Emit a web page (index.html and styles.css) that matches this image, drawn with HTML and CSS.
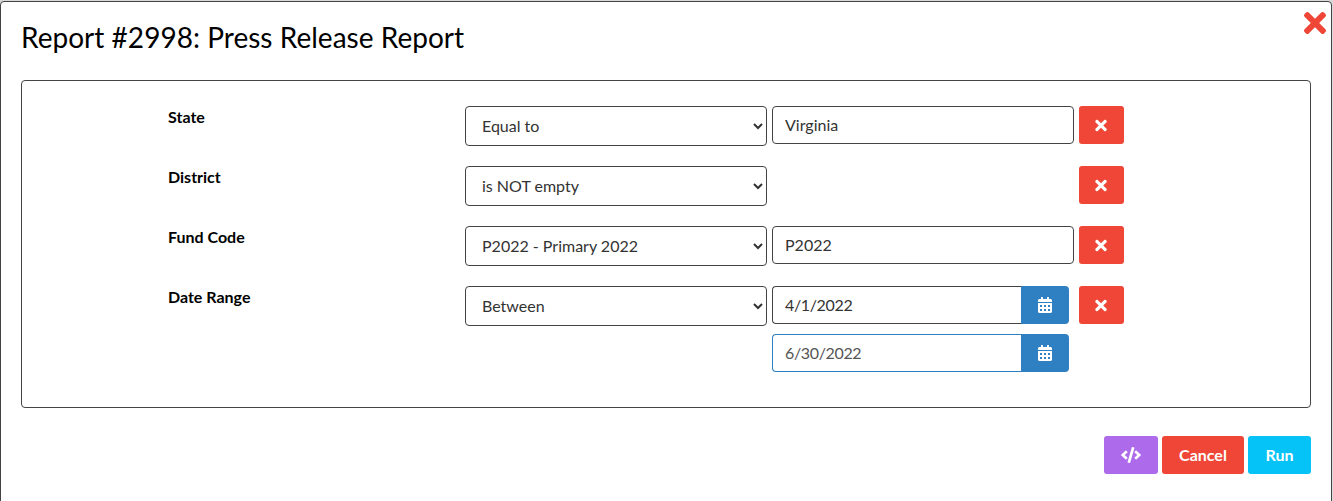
FILE: index.html
```html
<!DOCTYPE html>
<html lang="en">
<head>
    <meta charset="UTF-8">
    <meta name="viewport" content="width=device-width, initial-scale=1.0">
    <title>Press Release Report</title>
    <link rel="stylesheet" href="styles.css">
</head>
<body>
    <svg class="sprite">
        <symbol id="times" viewBox="0 0 352 512">
            <path d="M242.72 256l100.07-100.07c12.28-12.28 12.28-32.19 0-44.48l-22.24-22.24c-12.28-12.28-32.19-12.28-44.48 0L176 189.28 75.93 89.21c-12.28-12.28-32.19-12.28-44.48 0L9.21 111.45c-12.28 12.28-12.28 32.19 0 44.48L109.28 256 9.21 356.07c-12.28 12.28-12.28 32.19 0 44.48l22.24 22.24c12.28 12.28 32.2 12.28 44.48 0L176 322.72l100.07 100.07c12.28 12.28 32.2 12.28 44.48 0l22.24-22.24c12.28-12.28 12.28-32.19 0-44.48L242.72 256z"/>
        </symbol>
        <symbol id="calendar" viewBox="0 0 448 512">
            <path d="M0 464c0 26.5 21.5 48 48 48h352c26.5 0 48-21.5 48-48V192H0v272zm320-196c0-6.6 5.4-12 12-12h40c6.6 0 12 5.4 12 12v40c0 6.6-5.4 12-12 12h-40c-6.6 0-12-5.4-12-12v-40zm0 128c0-6.6 5.4-12 12-12h40c6.6 0 12 5.4 12 12v40c0 6.6-5.4 12-12 12h-40c-6.6 0-12-5.4-12-12v-40zM192 268c0-6.6 5.4-12 12-12h40c6.6 0 12 5.4 12 12v40c0 6.6-5.4 12-12 12h-40c-6.6 0-12-5.4-12-12v-40zm0 128c0-6.6 5.4-12 12-12h40c6.6 0 12 5.4 12 12v40c0 6.6-5.4 12-12 12h-40c-6.6 0-12-5.4-12-12v-40zM64 268c0-6.6 5.4-12 12-12h40c6.6 0 12 5.4 12 12v40c0 6.6-5.4 12-12 12H76c-6.6 0-12-5.4-12-12v-40zm0 128c0-6.6 5.4-12 12-12h40c6.6 0 12 5.4 12 12v40c0 6.6-5.4 12-12 12H76c-6.6 0-12-5.4-12-12v-40zM400 64h-48V16c0-8.8-7.2-16-16-16h-32c-8.8 0-16 7.2-16 16v48H160V16c0-8.8-7.2-16-16-16h-32c-8.8 0-16 7.2-16 16v48H48C21.5 64 0 85.5 0 112v48h448v-48c0-26.5-21.5-48-48-48z"/>
        </symbol>
        <symbol id="code" viewBox="0 0 640 512">
            <path d="M278.9 511.5l-61-17.7c-6.4-1.8-10-8.5-8.2-14.9L346.2 8.7c1.8-6.4 8.5-10 14.9-8.2l61 17.7c6.4 1.8 10 8.5 8.2 14.9L293.8 503.3c-1.9 6.4-8.5 10.1-14.9 8.2zm-114-112.2l43.5-46.4c4.6-4.9 4.3-12.7-.8-17.2L117 256l90.6-79.7c5.1-4.5 5.5-12.3.8-17.2l-43.5-46.4c-4.5-4.8-12.1-5.1-17-.5L3.8 247.2c-5.1 4.7-5.1 12.8 0 17.5l144.1 135.1c4.9 4.6 12.5 4.4 17-.5zm327.2.6l144.1-135.1c5.1-4.7 5.1-12.8 0-17.5L492.1 112.1c-4.8-4.5-12.4-4.3-17 .5L431.6 159c-4.6 4.9-4.3 12.7.8 17.2L523 256l-90.6 79.7c-5.1 4.5-5.5 12.3-.8 17.2l43.5 46.4c4.5 4.9 12.1 5.1 17 .6z"/>
        </symbol>
    </svg>

    <div class="modal">
        <button type="button" class="close" aria-label="Close"><svg class="icon-close"><use href="#times"/></svg></button>
        <h1>Report #2998: Press Release Report</h1>

        <form id="reportForm">
            <div class="filters">
                <div class="row">
                    <label for="state">State</label>
                    <select id="state">
                        <option>Equal to</option>
                    </select>
                    <input type="text" class="value" value="Virginia">
                    <button type="button" class="btn red"><svg class="icon-times"><use href="#times"/></svg></button>
                </div>

                <div class="row">
                    <label for="district">District</label>
                    <select id="district">
                        <option>is NOT empty</option>
                    </select>
                    <div class="value-empty"></div>
                    <button type="button" class="btn red"><svg class="icon-times"><use href="#times"/></svg></button>
                </div>

                <div class="row">
                    <label for="fund">Fund Code</label>
                    <select id="fund">
                        <option>P2022 - Primary 2022</option>
                    </select>
                    <input type="text" class="value" value="P2022">
                    <button type="button" class="btn red"><svg class="icon-times"><use href="#times"/></svg></button>
                </div>

                <div class="row">
                    <label for="range">Date Range</label>
                    <select id="range">
                        <option>Between</option>
                    </select>
                    <div class="dates">
                        <div class="date">
                            <input type="text" value="4/1/2022">
                            <button type="button" class="btn blue"><svg class="icon-calendar"><use href="#calendar"/></svg></button>
                        </div>
                        <div class="date active">
                            <input type="text" value="6/30/2022">
                            <button type="button" class="btn blue"><svg class="icon-calendar"><use href="#calendar"/></svg></button>
                        </div>
                    </div>
                    <button type="button" class="btn red"><svg class="icon-times"><use href="#times"/></svg></button>
                </div>
            </div>

            <div class="footer">
                <button type="button" class="btn purple"><svg class="icon-code"><use href="#code"/></svg></button>
                <button type="button" class="btn red cancel">Cancel</button>
                <button type="button" class="btn cyan run">Run</button>
            </div>
        </form>
    </div>
</body>
</html>
```

FILE: styles.css
```css
* {
    box-sizing: border-box;
}
body {
    font-family: Lato, sans-serif;
    font-size: 16px;
    line-height: 22px;
    color: #000;
    background-color: #d9d9d9;
    margin: 0;
    padding: 1px 1px 0 0;
    overflow: hidden;
}
.sprite {
    display: none;
}
.modal {
    position: relative;
    height: 520px;
    padding: 18px 20px 0;
    background-color: #fff;
    border: 1px solid #444;
    border-radius: 4px;
}
h1 {
    margin: 0 0 26px;
    font-size: 28px;
    font-weight: 400;
    line-height: 34px;
    letter-spacing: 0.03px;
}
.close {
    position: absolute;
    top: 5px;
    right: 5px;
    padding: 0;
    border: none;
    background: none;
    color: #f04638;
    cursor: pointer;
}
svg {
    display: block;
    height: 16px;
    fill: currentColor;
}
.icon-close {
    width: 22px;
    height: 32px;
}
.icon-times {
    width: 12px;
    height: 17px;
}
.icon-calendar {
    width: 14px;
}
.icon-code {
    width: 20px;
}
.filters {
    display: flex;
    flex-direction: column;
    gap: 20px;
    height: 328px;
    padding: 25px 0 0 146px;
    border: 1px solid #444;
    border-radius: 4px;
}
.row {
    display: grid;
    grid-template-columns: 292px 302px 302px 45px;
    column-gap: 5px;
    align-items: start;
}
.row > .btn {
    padding: 0 16px;
}
label {
    font-weight: bold;
}
select, input {
    width: 100%;
    height: 38px;
    padding: 0 12px 2px;
    font-family: inherit;
    font-size: 16px;
    color: #333;
    background-color: #fff;
    border: 1px solid #444;
    border-radius: 4px;
    outline: none;
}
select {
    height: 40px;
    padding: 0 1px 2px 12px;
}
.dates {
    display: flex;
    flex-direction: column;
    gap: 10px;
    width: 297px;
}
.date {
    display: flex;
}
.date input {
    flex: 1;
    letter-spacing: -0.35px;
    border-right: none;
    border-radius: 4px 0 0 4px;
}
.date .btn {
    border-radius: 0 4px 4px 0;
}
.active input {
    color: #555;
    border-color: #2e80c3;
}
.btn {
    display: flex;
    align-items: center;
    height: 38px;
    padding: 0 17px;
    font-family: inherit;
    font-size: 16px;
    font-weight: bold;
    color: #fff;
    border: none;
    border-radius: 3px;
    cursor: pointer;
}
.red {
    background-color: #f04638;
}
.blue {
    background-color: #2e80c3;
}
.purple {
    background-color: #ad6aea;
}
.cyan {
    background-color: #05c3f7;
}
.footer {
    display: flex;
    justify-content: flex-end;
    gap: 4px;
    margin-top: 28px;
}
.cancel, .run {
    justify-content: center;
    width: 82px;
    padding: 0 0 2px;
}
.run {
    width: 63px;
}
```
